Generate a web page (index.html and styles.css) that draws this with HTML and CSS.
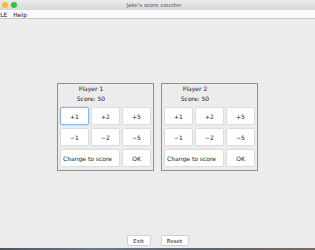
FILE: index.html
```html
<!DOCTYPE html>
<html lang="en">
<head>
    <meta charset="UTF-8">
    <meta name="viewport" content="width=device-width, initial-scale=1.0">
    <title>Jake's score counter</title>
    <link rel="stylesheet" href="styles.css">
</head>
<body>
    <div class="window">
        <div class="titlebar">
            <div class="lights">
                <span class="light red"></span>
                <span class="light yellow"></span>
                <span class="light green"></span>
            </div>
            <div class="title">Jake's score counter</div>
        </div>
        <div class="menubar">
            <span class="menu">FILE</span>
            <span class="menu">Help</span>
        </div>

        <div class="content">
            <div class="panel">
                <div class="player">Player 1</div>
                <div class="score">Score: 50</div>
                <div class="buttons">
                    <button class="focused">+1</button>
                    <button>+2</button>
                    <button>+5</button>
                    <button>&minus;1</button>
                    <button>&minus;2</button>
                    <button>&minus;5</button>
                    <button class="change">Change to score</button>
                    <button>OK</button>
                </div>
            </div>

            <div class="panel">
                <div class="player">Player 2</div>
                <div class="score">Score: 50</div>
                <div class="buttons">
                    <button>+1</button>
                    <button>+2</button>
                    <button>+5</button>
                    <button>&minus;1</button>
                    <button>&minus;2</button>
                    <button>&minus;5</button>
                    <button class="change">Change to score</button>
                    <button>OK</button>
                </div>
            </div>
        </div>

        <div class="footer">
            <button class="small">Exit</button>
            <button class="small">Reset</button>
        </div>
    </div>
    <div class="desktop"></div>
</body>
</html>
```

FILE: styles.css
```css
html, body {
    margin: 0;
    padding: 0;
    overflow: hidden;
}

body {
    width: 315px;
    height: 250px;
    background-color: #ececec;
    font-family: "DejaVu Sans", sans-serif;
    font-size: 6px;
    color: #222222;
}

.window {
    display: flex;
    flex-direction: column;
    height: 248px;
    margin-left: -9px;
    width: 324px;
}

.titlebar {
    height: 10px;
    display: flex;
    align-items: center;
    background: linear-gradient(#ebebeb, #d8d8d8);
}

.lights {
    display: flex;
    gap: 3px;
    padding-left: 2px;
    width: 40px;
}

.light {
    width: 6px;
    height: 6px;
    border-radius: 50%;
}

.red { background-color: #fc5f57; }
.yellow { background-color: #fdbc2e; }
.green { background-color: #28c840; }

.title {
    flex: 1;
    text-align: center;
    color: #555555;
    font-size: 5.5px;
    padding-right: 40px;
}

.menubar {
    height: 8px;
    display: flex;
    align-items: center;
    gap: 6px;
    padding-left: 4px;
    background-color: #fafafa;
    border-bottom: 1px solid #c9c9c9;
    font-size: 6px;
    color: #111111;
}

.content {
    flex: 1;
    display: flex;
    justify-content: center;
    align-items: flex-start;
    gap: 7px;
    padding-top: 64px;
    padding-left: 9px;
}

.panel {
    border: 1px solid #8f8f8f;
    padding: 0 1px 3px 2px;
    width: 92px;
}

/* labels sit over the first two button columns */
.player,
.score {
    width: 62px;
    height: 10px;
    line-height: 10px;
    text-align: center;
    white-space: nowrap;
}

.score {
    margin-bottom: 3px;
}

.buttons {
    display: grid;
    grid-template-columns: repeat(3, 29px);
    grid-auto-rows: 18px;
    gap: 3px 2px;
}

button {
    font-family: "DejaVu Sans", sans-serif;
    font-size: 6px;
    color: #222222;
    background-color: #ffffff;
    border: 1px solid #dcdcdc;
    border-radius: 2px;
    padding: 0;
    margin: 0;
}

button.focused {
    border-color: #8ab6ec;
    box-shadow: 0 0 0 1px #cfe0f6;
}

button.change {
    grid-column: span 2;
    text-align: left;
    padding-left: 2px;
}

.footer {
    display: flex;
    justify-content: center;
    gap: 10px;
    padding-left: 9px;
    padding-bottom: 2px;
}

button.small {
    height: 11px;
    font-size: 5.5px;
    border-color: #d0d0d0;
}

button.small:first-child {
    width: 24px;
}

button.small:last-child {
    width: 28px;
}

.desktop {
    height: 2px;
    background: linear-gradient(90deg, #4d5560, #6c7a88 30%, #5a6470 60%, #7a6a60);
}
```
